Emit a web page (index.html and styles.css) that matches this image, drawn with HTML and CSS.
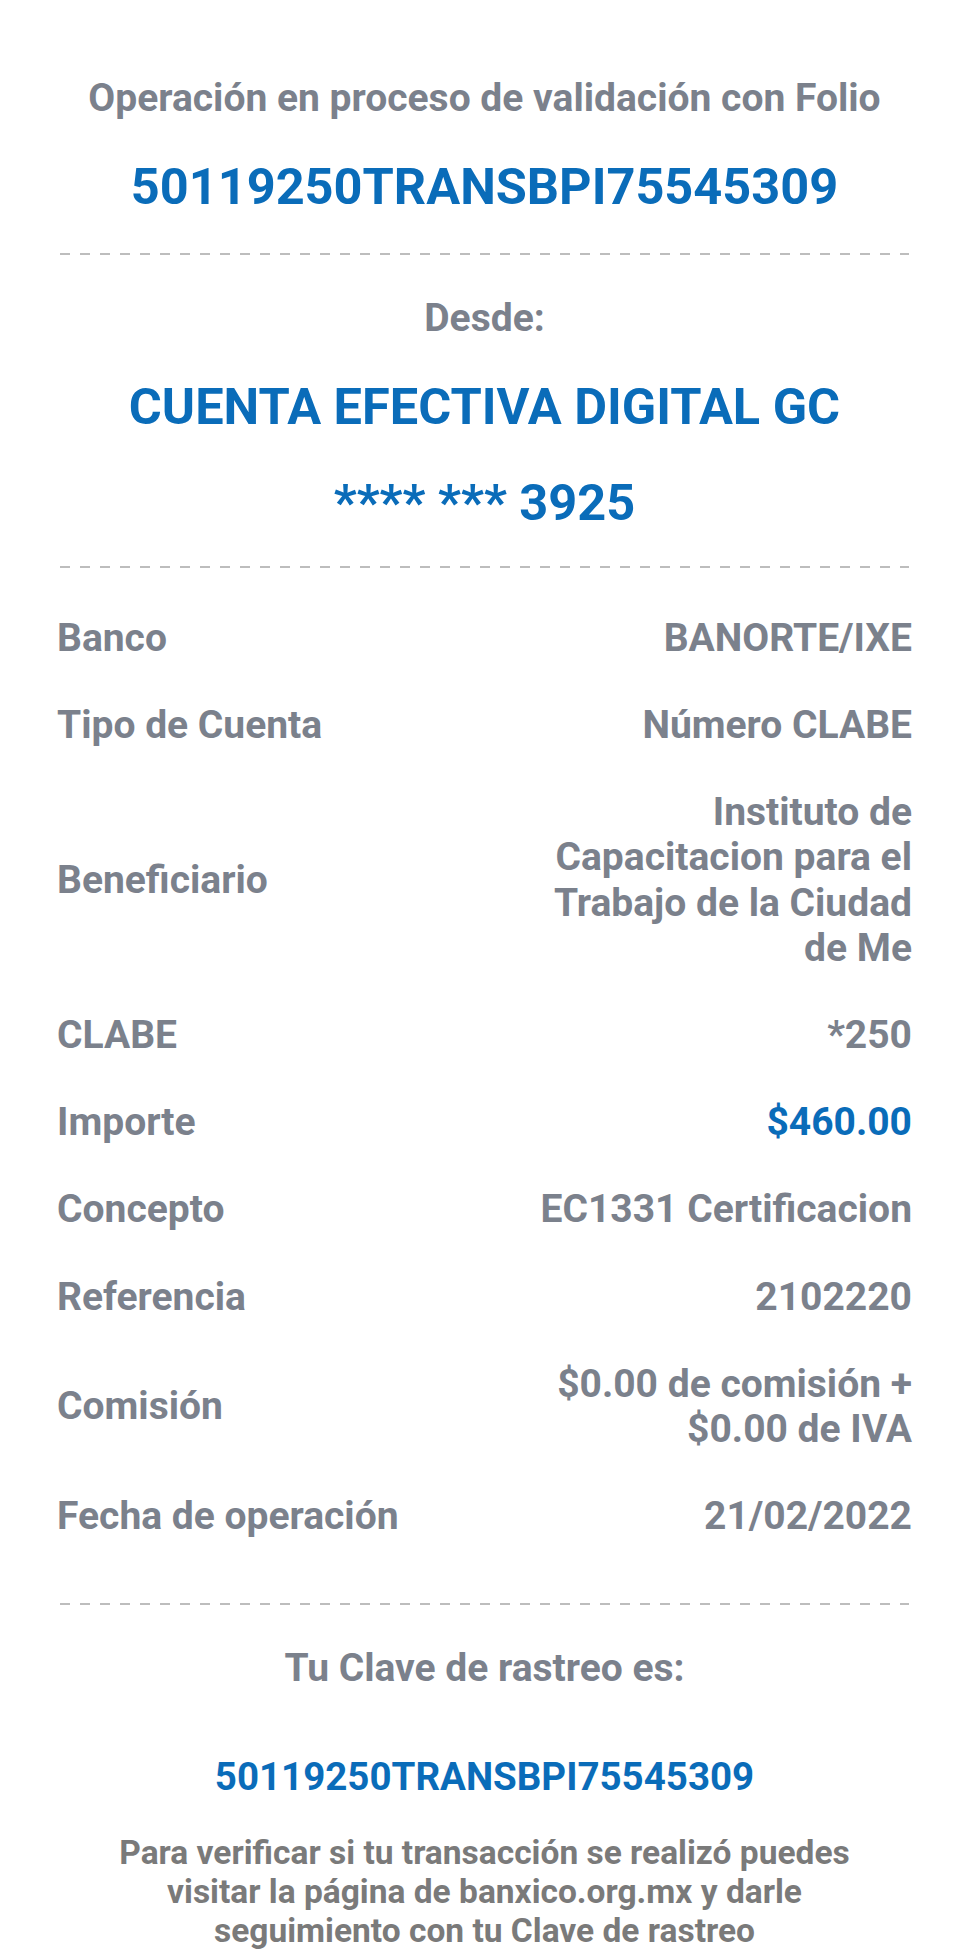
FILE: index.html
```html
<!DOCTYPE html>
<html lang="es">
<head>
<meta charset="utf-8">
<title>Comprobante</title>
<link rel="stylesheet" href="styles.css">
</head>
<body>
<main class="receipt">
  <section class="head">
    <p class="head-label">Operación en proceso de validación con Folio</p>
    <p class="folio">50119250TRANSBPI75545309</p>
  </section>
  <hr class="dash dash-first">
  <section class="from">
    <p class="from-label">Desde:</p>
    <p class="account">CUENTA EFECTIVA DIGITAL GC</p>
    <p class="account account-num">**** *** 3925</p>
  </section>
  <hr class="dash">
  <section class="details">
    <div class="row"><span class="label">Banco</span><span class="value">BANORTE/IXE</span></div>
    <div class="row"><span class="label">Tipo de Cuenta</span><span class="value">Número CLABE</span></div>
    <div class="row"><span class="label">Beneficiario</span><span class="value">Instituto de Capacitacion para el Trabajo de la Ciudad de Me</span></div>
    <div class="row"><span class="label">CLABE</span><span class="value">*250</span></div>
    <div class="row"><span class="label">Importe</span><span class="value value-blue">$460.00</span></div>
    <div class="row"><span class="label">Concepto</span><span class="value">EC1331 Certificacion</span></div>
    <div class="row"><span class="label">Referencia</span><span class="value">2102220</span></div>
    <div class="row"><span class="label">Comisión</span><span class="value">$0.00 de comisión + $0.00 de IVA</span></div>
    <div class="row"><span class="label">Fecha de operación</span><span class="value">21/02/2022</span></div>
  </section>
  <hr class="dash">
  <section class="tracking">
    <p class="track-label">Tu Clave de rastreo es:</p>
    <p class="track-code">50119250TRANSBPI75545309</p>
    <p class="track-note">Para verificar si tu transacción se realizó puedes visitar la página de banxico.org.mx y darle seguimiento con tu Clave de rastreo</p>
  </section>
</main>
</body>
</html>
```

FILE: styles.css
```css
html, body {
  margin: 0;
  padding: 0;
  background: #ffffff;
}
body {
  font-family: Roboto, "Liberation Sans", Arial, sans-serif;
  font-weight: 700;
  color: #7b818c;
}
p { margin: 0; }

.receipt {
  padding: 0 56px 0 57px;
}

.head {
  padding-top: 77px;
  text-align: center;
}
.head-label {
  font-size: 39px;
  line-height: 42px;
}
.folio {
  margin-top: 40px;
  font-size: 50.5px;
  line-height: 56px;
  color: #0a6cb9;
}

.dash {
  border: 0;
  height: 2px;
  margin: 35px 3px 0 3px;
  background-image: linear-gradient(to right, #bdbdbd 0 10px, transparent 10px 20px);
  background-size: 20px 2px;
  background-repeat: repeat-x;
}
.dash-first {
  margin-top: 37.5px;
}

.from {
  padding-top: 42px;
  text-align: center;
}
.from-label {
  font-size: 39px;
  line-height: 42px;
}
.account {
  margin-top: 40px;
  font-size: 50.5px;
  line-height: 56px;
  color: #0a6cb9;
}

.details {
  padding-top: 48px;
  padding-bottom: 28px;
  display: flex;
  flex-direction: column;
  gap: 41.6px;
}
.row {
  display: flex;
  justify-content: space-between;
  align-items: center;
  font-size: 39px;
  line-height: 45.5px;
}
.value {
  max-width: 45%;
  text-align: right;
}
.value-blue { color: #0a6cb9; }

.tracking {
  padding-top: 42px;
  text-align: center;
}
.track-label {
  font-size: 39px;
  line-height: 42px;
}
.track-code {
  margin-top: 66px;
  font-size: 38.5px;
  line-height: 43px;
  color: #0a6cb9;
}
.track-note {
  margin: 35px auto 0;
  max-width: 780px;
  font-size: 33.5px;
  line-height: 39px;
  color: #7a7a7a;
}
```
